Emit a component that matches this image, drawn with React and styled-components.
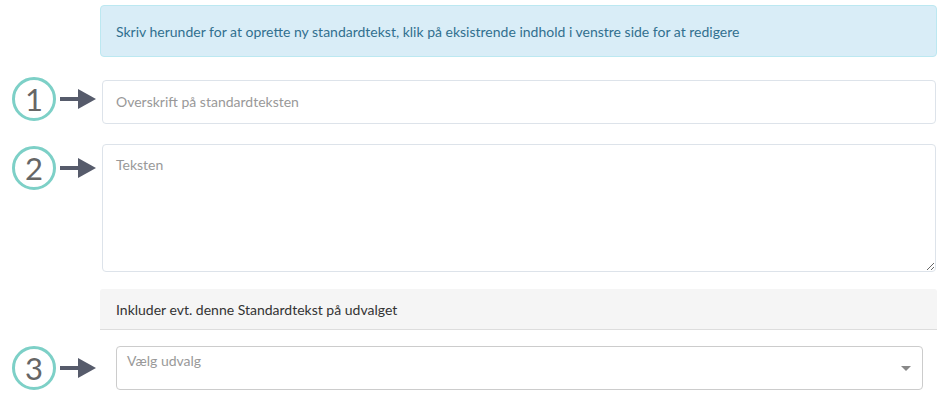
import React from "react";
import styled, { createGlobalStyle } from "styled-components";

const GlobalStyle = createGlobalStyle`
  body {
    margin: 0;
    background: #fff;
    font-family: Lato, "Open Sans", sans-serif;
    font-size: 14px;
    color: #333;
  }
  * {
    box-sizing: border-box;
  }
`;

const Arrow = () => (
  <svg width="36" height="22" viewBox="0 0 36 22">
    <rect x="0" y="9" width="19" height="4" fill="#565b6b" />
    <polygon points="18,1 36,11 18,21" fill="#565b6b" />
  </svg>
);

const Marker = ({ n, top }) => (
  <MarkerWrap top={top}>
    <Circle>{n}</Circle>
    <Arrow />
  </MarkerWrap>
);

const App = () => {
  return (
    <>
      <GlobalStyle />
      <Page>
        <Row>
          <Spacer />
          <Alert>
            Skriv herunder for at oprette ny standardtekst, klik på eksistrende
            indhold i venstre side for at redigere
          </Alert>
        </Row>

        <Row gap={23}>
          <Marker n="1" top={-3} />
          <Field>
            <Input placeholder="Overskrift på standardteksten" />
          </Field>
        </Row>

        <Row gap={20}>
          <Marker n="2" top={2} />
          <Field>
            <TextArea placeholder="Teksten" />
          </Field>
        </Row>

        <Row gap={17}>
          <Spacer />
          <Panel>
            <PanelHeading>Inkluder evt. denne Standardtekst på udvalget</PanelHeading>
          </Panel>
        </Row>

        <Row gap={16}>
          <Marker n="3" top={0} />
          <SelectField>
            <Select>
              <SelectPlaceholder>Vælg udvalg</SelectPlaceholder>
              <Caret />
            </Select>
          </SelectField>
        </Row>
      </Page>
    </>
  );
};

// start styling

const Page = styled.div`
  padding-top: 5px;
  width: 945px;
`;

const Row = styled.div`
  display: flex;
  align-items: flex-start;
  margin-top: ${({ gap }) => gap || 0}px;
`;

const Spacer = styled.div`
  width: 100px;
  flex-shrink: 0;
`;

const MarkerWrap = styled.div`
  width: 102px;
  flex-shrink: 0;
  display: flex;
  align-items: center;
  gap: 4px;
  padding-left: 12px;
  margin-top: ${({ top }) => top}px;
`;

const Circle = styled.div`
  width: 44px;
  height: 44px;
  border-radius: 50%;
  border: 3.5px solid #7dd0c7;
  display: flex;
  align-items: center;
  justify-content: center;
  font-size: 31px;
  color: #666;
  line-height: 1;
`;

const Alert = styled.div`
  width: 837px;
  height: 52px;
  padding: 0 15px;
  display: flex;
  align-items: center;
  background: #d9edf7;
  border: 1px solid #bce8f1;
  border-radius: 4px;
  color: #31708f;
  font-size: 14px;
`;

const Field = styled.div`
  width: 834px;
`;

const Input = styled.input`
  display: block;
  width: 100%;
  height: 44px;
  padding: 0 13px 2px;
  border: 1px solid #dde3ea;
  border-radius: 4px;
  font-family: Lato, sans-serif;
  font-size: 14px;
  color: #333;
  outline: none;

  &::placeholder {
    color: #999;
  }
`;

const TextArea = styled.textarea`
  display: block;
  width: 100%;
  height: 128px;
  padding: 11px 13px;
  border: 1px solid #dde3ea;
  border-radius: 4px;
  font-family: Lato, sans-serif;
  font-size: 14px;
  color: #333;
  outline: none;
  resize: vertical;

  &::placeholder {
    color: #999;
  }
`;

const Panel = styled.div`
  width: 837px;
  background: #f5f5f5;
  border-bottom: 1px solid #ddd;
  border-radius: 3px 3px 0 0;
`;

const PanelHeading = styled.div`
  height: 40px;
  padding: 0 16px;
  display: flex;
  align-items: center;
  color: #333;
  font-size: 14px;
`;

const SelectField = styled.div`
  width: 821px;
  padding-left: 14px;
`;

const Select = styled.div`
  position: relative;
  width: 807px;
  height: 44px;
  border: 1px solid #ccc;
  border-radius: 4px;
  padding: 5px 10px;
`;

const SelectPlaceholder = styled.span`
  color: #999;
  font-size: 14px;
`;

const Caret = styled.span`
  position: absolute;
  right: 11px;
  top: 19px;
  width: 0;
  height: 0;
  border-left: 5px solid transparent;
  border-right: 5px solid transparent;
  border-top: 5px solid #888;
`;

// end styling

export default App;
